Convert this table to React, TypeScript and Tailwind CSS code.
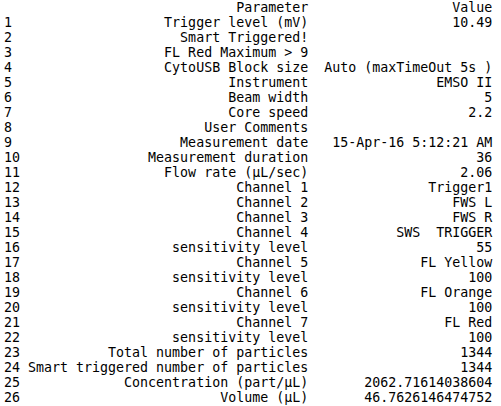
import React from 'react';

const rows: [string, string][] = [
  ['Trigger level (mV)', '10.49'],
  ['Smart Triggered!', ''],
  ['FL Red Maximum > 9', ''],
  ['CytoUSB Block size', 'Auto (maxTimeOut 5s )'],
  ['Instrument', 'EMSO II'],
  ['Beam width', '5'],
  ['Core speed', '2.2'],
  ['User Comments', ''],
  ['Measurement date', '15-Apr-16 5:12:21 AM'],
  ['Measurement duration', '36'],
  ['Flow rate (μL/sec)', '2.06'],
  ['Channel 1', 'Trigger1'],
  ['Channel 2', 'FWS L'],
  ['Channel 3', 'FWS R'],
  ['Channel 4', 'SWS  TRIGGER'],
  ['sensitivity level', '55'],
  ['Channel 5', 'FL Yellow'],
  ['sensitivity level', '100'],
  ['Channel 6', 'FL Orange'],
  ['sensitivity level', '100'],
  ['Channel 7', 'FL Red'],
  ['sensitivity level', '100'],
  ['Total number of particles', '1344'],
  ['Smart triggered number of particles', '1344'],
  ['Concentration (part/μL)', '2062.71614038604'],
  ['Volume (μL)', '46.7626146474752'],
];

export default function App() {
  const paramW = 35;
  const valueW = 22;
  const lines = [
    '  ' + ' ' + 'Parameter'.padStart(paramW) + ' ' + 'Value'.padStart(valueW),
    ...rows.map(
      ([p, v], i) =>
        String(i + 1).padEnd(2) + ' ' + p.padStart(paramW) + ' ' + v.padStart(valueW)
    ),
  ];

  return (
    <div className="w-[501px] h-[406px] bg-white overflow-hidden">
      <pre className="pl-1 m-0 text-black text-[13.3px] leading-[15px] font-['DejaVu_Sans_Mono',monospace]">
        {lines.join('\n')}
      </pre>
    </div>
  );
}
